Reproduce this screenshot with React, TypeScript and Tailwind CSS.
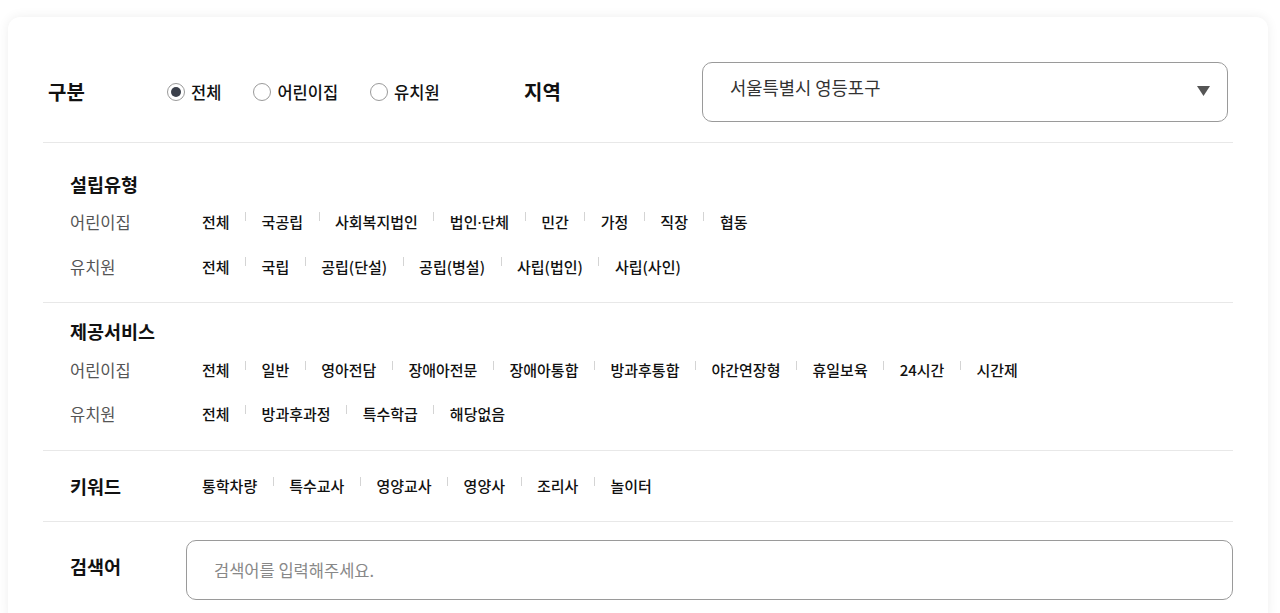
import { useState } from "react";

const font = { fontFamily: '"Noto Sans CJK KR", "Noto Sans", sans-serif' };

const establishment = [
  { label: "어린이집", items: ["전체", "국공립", "사회복지법인", "법인·단체", "민간", "가정", "직장", "협동"] },
  { label: "유치원", items: ["전체", "국립", "공립(단설)", "공립(병설)", "사립(법인)", "사립(사인)"] },
];

const services = [
  {
    label: "어린이집",
    items: ["전체", "일반", "영아전담", "장애아전문", "장애아통합", "방과후통합", "야간연장형", "휴일보육", "24시간", "시간제"],
  },
  { label: "유치원", items: ["전체", "방과후과정", "특수학급", "해당없음"] },
];

const keywords = ["통학차량", "특수교사", "영양교사", "영양사", "조리사", "놀이터"];

// the CJK middle dot is full width, so set it in a latin face
function Label({ text }: { text: string }) {
  const parts = text.split("·");
  if (parts.length === 1) return <>{text}</>;
  return (
    <>
      {parts[0]}
      <span style={{ fontFamily: '"Noto Sans", sans-serif' }}>·</span>
      {parts[1]}
    </>
  );
}

function ItemList({ items }: { items: string[] }) {
  return (
    <div className="flex items-center">
      {items.map((item, i) => (
        <div key={item + i} className="flex items-center">
          {i > 0 && <span className="mx-[15.5px] h-[9px] w-px -translate-y-[5px] bg-[#d4d4d4]" />}
          <button className="text-[15px] font-medium leading-6 text-[#111]">
            <Label text={item} />
          </button>
        </div>
      ))}
    </div>
  );
}

function Radio({ label, checked, onClick }: { label: string; checked: boolean; onClick: () => void }) {
  return (
    <button onClick={onClick} className="flex items-center gap-[6px]">
      <span className="flex h-[18px] w-[18px] items-center justify-center rounded-full border border-[#9a9a9a] bg-white">
        {checked && <span className="h-[10px] w-[10px] rounded-full bg-[#3a3f4a]" />}
      </span>
      <span className="text-[16.5px] font-medium leading-6 text-[#111]">{label}</span>
    </button>
  );
}

function Group({ title, rows, top, rowH }: { title: string; rows: { label: string; items: string[] }[]; top: string; rowH: string }) {
  return (
    <div className={`border-b border-[#e8e8e8] pl-[27px] ${top}`}>
      <h3 className="text-[18.5px] font-bold leading-6 text-[#111]">{title}</h3>
      {rows.map((row) => (
        <div key={row.label} className={`flex items-center ${rowH}`}>
          <span className="w-[132px] text-[16.5px] leading-6 text-[#555]">{row.label}</span>
          <ItemList items={row.items} />
        </div>
      ))}
    </div>
  );
}

export default function App() {
  const [kind, setKind] = useState("전체");

  return (
    <div className="min-h-[613px] bg-white pl-2 pr-3 pt-[17px]" style={font}>
      <div className="rounded-[12px] bg-white px-[35px] pt-[45px] pb-6 shadow-[0_0_12px_rgba(0,0,0,0.07)]">
        <div className="flex items-center border-b border-[#e8e8e8] pb-5">
          <span className="w-[124px] pl-[5px] text-[20px] font-bold leading-6 text-[#111]">구분</span>
          <div className="flex w-[357px] items-center gap-8">
            {["전체", "어린이집", "유치원"].map((k) => (
              <Radio key={k} label={k} checked={kind === k} onClick={() => setKind(k)} />
            ))}
          </div>
          <span className="w-[178px] text-[20px] font-bold leading-6 text-[#111]">지역</span>
          <div className="mr-[5px] flex h-[60px] flex-1 items-start justify-between rounded-[10px] border border-[#9a9a9a] pl-[27px] pr-[17px] pt-[12px]">
            <span className="text-[17.7px] leading-6 text-[#333]">서울특별시 영등포구</span>
            <svg width="13" height="10" viewBox="0 0 13 10" className="mt-[11px]">
              <path d="M0 0 H13 L6.5 10 Z" fill="#555" />
            </svg>
          </div>
        </div>

        <Group title="설립유형" rows={establishment} top="pt-[29px] pb-[13px] [&>h3]:mb-[3px]" rowH="h-[45px]" />
        <Group title="제공서비스" rows={services} top="pt-[16px] pb-[14px] [&>h3]:mb-[5px]" rowH="h-[44px]" />

        <div className="flex h-[71px] items-center border-b border-[#e8e8e8] pl-[27px]">
          <span className="w-[132px] text-[18.5px] font-bold leading-6 text-[#111]">키워드</span>
          <ItemList items={keywords} />
        </div>

        <div className="flex items-start pt-[18px]">
          <span className="mt-[14px] w-[143px] pl-[27px] text-[18.5px] font-bold leading-6 text-[#111]">검색어</span>
          <input
            placeholder="검색어를 입력해주세요."
            className="h-[60px] flex-1 rounded-[10px] border border-[#9a9a9a] pl-[27px] text-[16.5px] text-[#333] outline-none placeholder:text-[#888]"
          />
        </div>
      </div>
    </div>
  );
}
